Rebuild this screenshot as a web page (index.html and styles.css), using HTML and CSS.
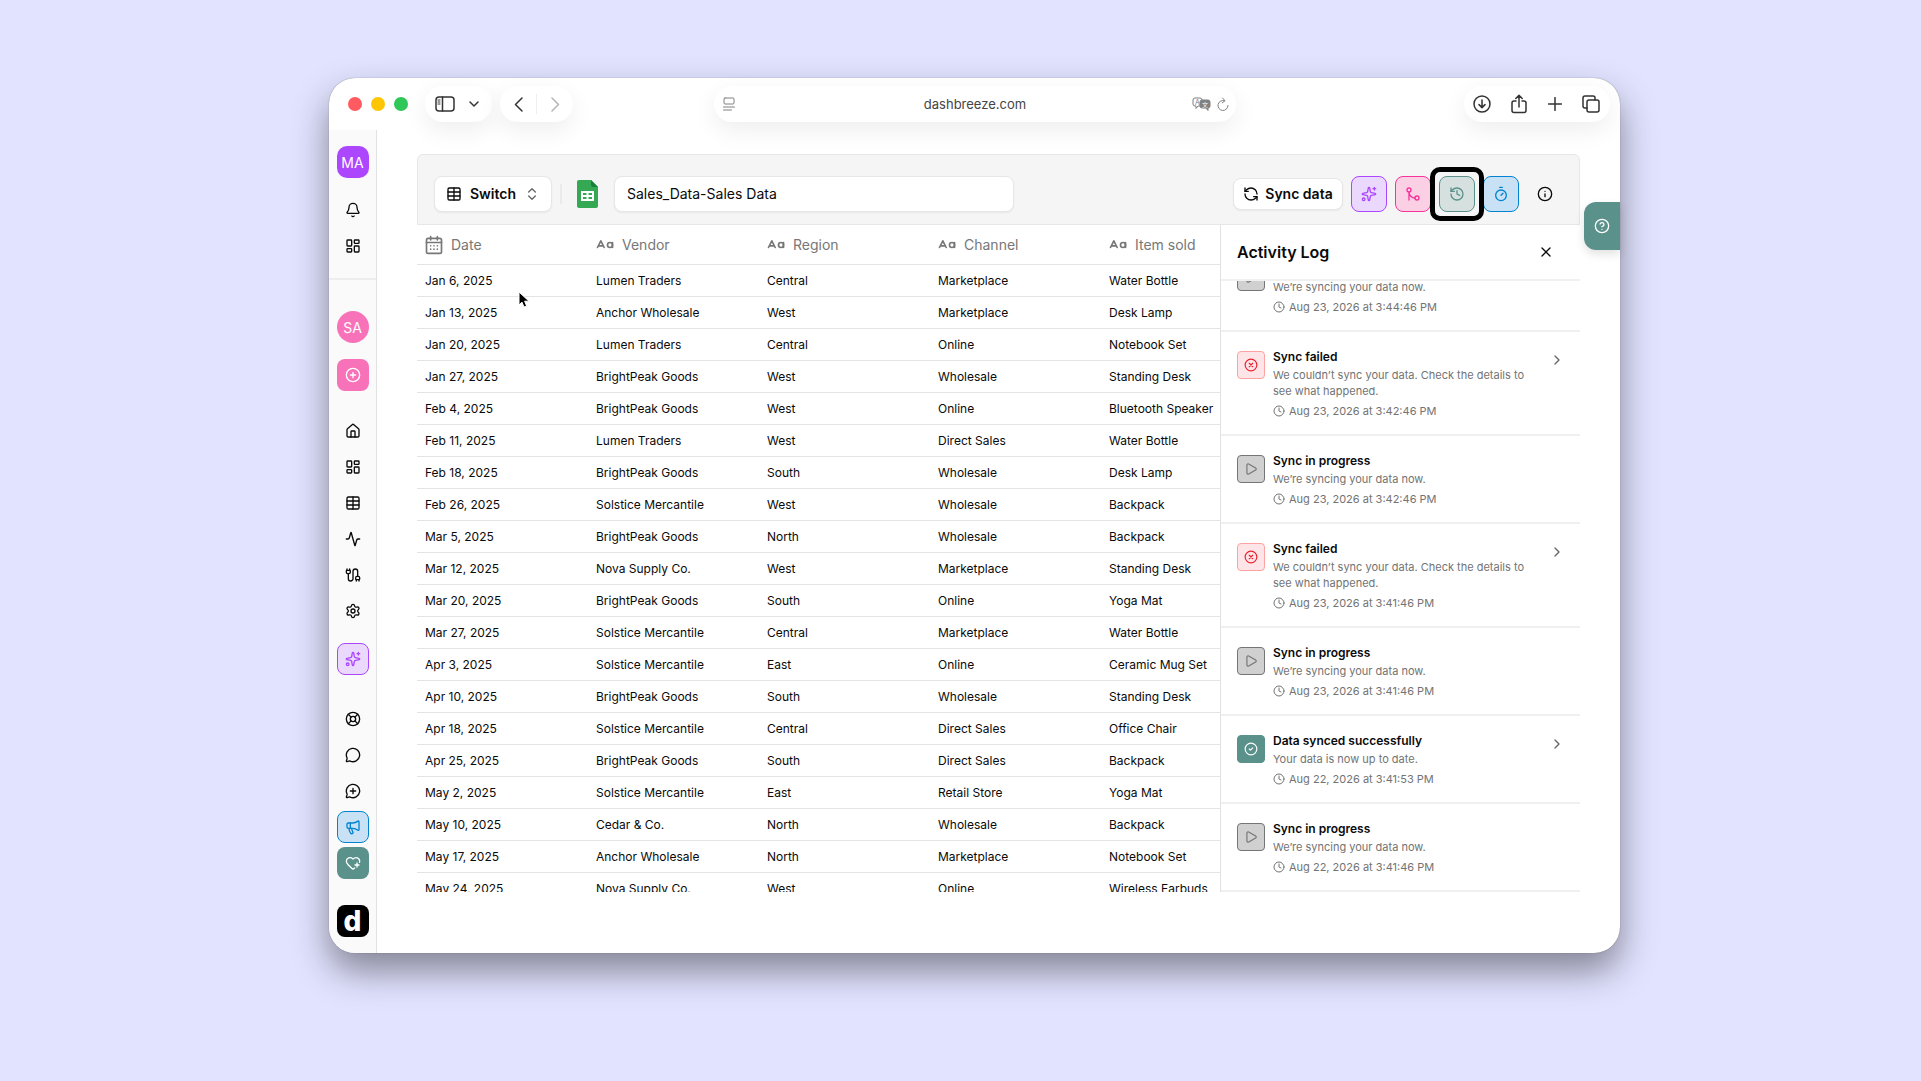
FILE: index.html
```html
<!DOCTYPE html>
<html lang="en">
<head>
    <meta charset="UTF-8">
    <meta name="viewport" content="width=device-width, initial-scale=1.0">
    <title>Dashbreeze - Sales_Data</title>
    <link rel="stylesheet" href="styles.css">
</head>
<body>
    <!-- Icon set -->
    <svg class="icon-defs" aria-hidden="true">
        <symbol id="bell" viewBox="0 0 24 24"><path d="M10.268 21a2 2 0 0 0 3.464 0"/><path d="M3.262 15.326A1 1 0 0 0 4 17h16a1 1 0 0 0 .74-1.673C19.41 13.956 18 12.499 18 8A6 6 0 0 0 6 8c0 4.499-1.411 5.956-2.738 7.326"/></symbol>
        <symbol id="dashboard" viewBox="0 0 24 24"><rect x="3" y="3" width="7" height="9" rx="1"/><rect x="14" y="3" width="7" height="5" rx="1"/><rect x="14" y="12" width="7" height="9" rx="1"/><rect x="3" y="16" width="7" height="5" rx="1"/></symbol>
        <symbol id="circle-plus" viewBox="0 0 24 24"><circle cx="12" cy="12" r="10"/><path d="M8 12h8M12 8v8"/></symbol>
        <symbol id="home" viewBox="0 0 24 24"><path d="M15 21v-8a1 1 0 0 0-1-1h-4a1 1 0 0 0-1 1v8"/><path d="M3 10a2 2 0 0 1 .709-1.528l7-5.999a2 2 0 0 1 2.582 0l7 5.999A2 2 0 0 1 21 10v9a2 2 0 0 1-2 2H5a2 2 0 0 1-2-2z"/></symbol>
        <symbol id="table" viewBox="0 0 24 24"><rect x="3" y="3" width="18" height="18" rx="2"/><path d="M12 3v18M3 9h18M3 15h18"/></symbol>
        <symbol id="activity" viewBox="0 0 24 24"><path d="M22 12h-2.48a2 2 0 0 0-1.93 1.46l-2.35 8.36a.25.25 0 0 1-.48 0L9.24 2.18a.25.25 0 0 0-.48 0l-2.35 8.36A2 2 0 0 1 4.49 12H2"/></symbol>
        <symbol id="cable" viewBox="0 0 24 24"><path d="M17 19a1 1 0 0 1-1-1v-2a2 2 0 0 1 2-2h2a2 2 0 0 1 2 2v2a1 1 0 0 1-1 1z"/><path d="M17 21v-2M21 21v-2M3 5V3M7 5V3"/><path d="M19 14V6.5a1 1 0 0 0-7 0v11a1 1 0 0 1-7 0V10"/><path d="M4 10a2 2 0 0 1-2-2V6a1 1 0 0 1 1-1h4a1 1 0 0 1 1 1v2a2 2 0 0 1-2 2z"/></symbol>
        <symbol id="settings" viewBox="0 0 24 24"><path d="M9.671 4.136a2.34 2.34 0 0 1 4.659 0 2.34 2.34 0 0 0 3.319 1.915 2.34 2.34 0 0 1 2.33 4.033 2.34 2.34 0 0 0 0 3.831 2.34 2.34 0 0 1-2.33 4.033 2.34 2.34 0 0 0-3.319 1.915 2.34 2.34 0 0 1-4.659 0 2.34 2.34 0 0 0-3.32-1.915 2.34 2.34 0 0 1-2.33-4.033 2.34 2.34 0 0 0 0-3.831A2.34 2.34 0 0 1 6.35 6.051a2.34 2.34 0 0 0 3.319-1.915"/><circle cx="12" cy="12" r="3"/></symbol>
        <symbol id="sparkles" viewBox="0 0 24 24"><path d="M11.017 2.814a1 1 0 0 1 1.966 0l1.051 5.558a2 2 0 0 0 1.594 1.594l5.558 1.051a1 1 0 0 1 0 1.966l-5.558 1.051a2 2 0 0 0-1.594 1.594l-1.051 5.558a1 1 0 0 1-1.966 0l-1.051-5.558a2 2 0 0 0-1.594-1.594l-5.558-1.051a1 1 0 0 1 0-1.966l5.558-1.051a2 2 0 0 0 1.594-1.594z"/><path d="M20 2v4M22 4h-4"/><circle cx="4" cy="20" r="2"/></symbol>
        <symbol id="lifebuoy" viewBox="0 0 24 24"><circle cx="12" cy="12" r="10"/><circle cx="12" cy="12" r="4"/><path d="m4.93 4.93 4.24 4.24M14.83 9.17l4.24-4.24M14.83 14.83l4.24 4.24M9.17 14.83l-4.24 4.24"/></symbol>
        <symbol id="chat" viewBox="0 0 24 24"><path d="M2.992 16.342a2 2 0 0 1 .094 1.167l-1.065 3.29a1 1 0 0 0 1.236 1.168l3.413-.998a2 2 0 0 1 1.099.092 10 10 0 1 0-4.777-4.719"/></symbol>
        <symbol id="chat-plus" viewBox="0 0 24 24"><path d="M2.992 16.342a2 2 0 0 1 .094 1.167l-1.065 3.29a1 1 0 0 0 1.236 1.168l3.413-.998a2 2 0 0 1 1.099.092 10 10 0 1 0-4.777-4.719"/><path d="M8 12h8M12 8v8"/></symbol>
        <symbol id="megaphone" viewBox="0 0 24 24"><path d="M11 6a13 13 0 0 0 8.4-2.8A1 1 0 0 1 21 4v12a1 1 0 0 1-1.6.8A13 13 0 0 0 11 14H5a2 2 0 0 1-2-2V8a2 2 0 0 1 2-2z"/><path d="M6 14a12 12 0 0 0 2.4 7.2 2 2 0 0 0 3.2-2.4A8 8 0 0 1 10 14M8 6v8"/></symbol>
        <symbol id="heart-plus" viewBox="0 0 24 24"><path d="m14.479 19.374-.971.939a2 2 0 0 1-3 .019L5 15c-1.5-1.5-3-3.2-3-5.5a5.5 5.5 0 0 1 9.591-3.676.56.56 0 0 0 .818 0A5.49 5.49 0 0 1 22 9.5a5.2 5.2 0 0 1-.219 1.49"/><path d="M15 15h6M18 12v6"/></symbol>
        <symbol id="up-down" viewBox="0 0 24 24"><path d="m7 15 5 5 5-5M7 9l5-5 5 5"/></symbol>
        <symbol id="refresh" viewBox="0 0 24 24"><path d="M21 12a9 9 0 0 0-9-9 9.75 9.75 0 0 0-6.74 2.74L3 8"/><path d="M3 3v5h5"/><path d="M3 12a9 9 0 0 0 9 9 9.75 9.75 0 0 0 6.74-2.74L21 16"/><path d="M16 16h5v5"/></symbol>
        <symbol id="merge" viewBox="0 0 24 24"><circle cx="18" cy="18" r="3"/><circle cx="6" cy="6" r="3"/><path d="M6 21V9a9 9 0 0 0 9 9"/></symbol>
        <symbol id="history" viewBox="0 0 24 24"><path d="M3 12a9 9 0 1 0 9-9 9.75 9.75 0 0 0-6.74 2.74L3 8"/><path d="M3 3v5h5M12 7v5l4 2"/></symbol>
        <symbol id="timer" viewBox="0 0 24 24"><path d="M10 2h4M12 14l3-3"/><circle cx="12" cy="14" r="8"/></symbol>
        <symbol id="info" viewBox="0 0 24 24"><circle cx="12" cy="12" r="10"/><path d="M12 16v-4M12 8h.01"/></symbol>
        <symbol id="help" viewBox="0 0 24 24"><circle cx="12" cy="12" r="10"/><path d="M9.09 9a3 3 0 0 1 5.83 1c0 2-3 3-3 3M12 17h.01"/></symbol>
        <symbol id="close" viewBox="0 0 24 24"><path d="M18 6 6 18M6 6l12 12"/></symbol>
        <symbol id="play" viewBox="0 0 24 24"><path d="M5 5a2 2 0 0 1 3.008-1.728l11.997 6.998a2 2 0 0 1 .003 3.458l-12 7A2 2 0 0 1 5 19z"/></symbol>
        <symbol id="circle-x" viewBox="0 0 24 24"><circle cx="12" cy="12" r="10"/><path d="m15 9-6 6M9 9l6 6"/></symbol>
        <symbol id="circle-check" viewBox="0 0 24 24"><circle cx="12" cy="12" r="10"/><path d="m9 12 2 2 4-4"/></symbol>
        <symbol id="clock" viewBox="0 0 24 24"><circle cx="12" cy="12" r="10"/><path d="M12 6v6l4 2"/></symbol>
        <symbol id="chevron-right" viewBox="0 0 24 24"><path d="m9 18 6-6-6-6"/></symbol>
        <symbol id="case" viewBox="0 0 24 24"><path d="m3 15 4-8 4 8M4 13h6"/><circle cx="18" cy="12" r="3"/><path d="M21 9v6"/></symbol>
        <symbol id="calendar" viewBox="0 0 24 24"><path d="M8 2v4M16 2v4M3 9h18"/><rect x="3" y="4" width="18" height="18" rx="2"/><path d="M8 13h.01M12 13h.01M16 13h.01M8 17h.01M12 17h.01M16 17h.01"/></symbol>
    </svg>

    <div class="browser">
        <header class="toolbar">
            <div class="toolbar-left">
                <div class="lights">
                    <span class="light red"></span>
                    <span class="light yellow"></span>
                    <span class="light green"></span>
                </div>
                <div class="pill sidebar-pill">
                    <button aria-label="Sidebar">
                        <svg width="20" height="16" viewBox="0 0 20 16"><rect x="1" y="1" width="18" height="14" rx="3"/><path d="M7.500 1v14"/><path class="thin" d="M3 4h2M3 6h2M3 8h2"/></svg>
                    </button>
                    <button aria-label="Tab groups">
                        <svg width="10" height="6" viewBox="0 0 10 6"><path d="m1 1 4 4 4-4"/></svg>
                    </button>
                </div>
                <div class="pill nav-pill">
                    <button aria-label="Back"><svg width="9" height="15" viewBox="0 0 9 15"><path d="M8 1 1.500 7.500 8 14"/></svg></button>
                    <button class="muted" aria-label="Forward"><svg width="9" height="15" viewBox="0 0 9 15"><path d="M1 1l6.500 6.500L1 14"/></svg></button>
                </div>
            </div>
            <div class="pill url">
                <svg class="reader" width="12" height="14" viewBox="0 0 12 14"><rect x="1" y="1" width="10" height="6" rx="1"/><path d="M.5 10h11M.5 13h8"/></svg>
                <span class="domain">dashbreeze.com</span>
                <span class="url-tools">
                    <svg class="translate" width="20" height="14" viewBox="0 0 20 14">
                        <path d="M8 9H6l-2 2.500V9H3a2 2 0 0 1-2-2V3a2 2 0 0 1 2-2h5a2 2 0 0 1 2 1.500"/>
                        <path class="bubble" d="M10 3h6a2 2 0 0 1 2 2v4a2 2 0 0 1-2 2v2.500L14 11h-4a2 2 0 0 1-2-2V5a2 2 0 0 1 2-2z"/>
                        <text x="3" y="8">A</text>
                        <text class="cjk" x="10" y="10">文</text>
                    </svg>
                    <svg width="12" height="15" viewBox="0 0 12 15"><path class="thin" d="M11 8.500A5 5 0 1 1 7.500 3.700M5.500 1l2.500 2.700-2.800 2.200"/></svg>
                </span>
            </div>
            <div class="pill actions">
                <button aria-label="Downloads"><svg width="18" height="18" viewBox="0 0 18 18"><circle cx="9" cy="9" r="8"/><path d="M9 5v7.500M6 9.600l3 3 3-3"/></svg></button>
                <button aria-label="Share"><svg width="16" height="20" viewBox="0 0 16 20"><path d="M5 7H3a2 2 0 0 0-2 2v7.500a2 2 0 0 0 2 2h10a2 2 0 0 0 2-2V9a2 2 0 0 0-2-2h-2M8 13V1.500M4.800 4.500 8 1.300l3.200 3.200"/></svg></button>
                <button aria-label="New tab"><svg width="14" height="14" viewBox="0 0 14 14"><path d="M7 .5v13M.5 7h13"/></svg></button>
                <button aria-label="Show tabs"><svg width="18" height="18" viewBox="0 0 18 18"><rect x="5" y="5" width="12" height="12" rx="2"/><path d="M5 13H3a2 2 0 0 1-2-2V3a2 2 0 0 1 2-2h8a2 2 0 0 1 2 2v2"/></svg></button>
            </div>
        </header>

        <div class="page">
            <nav class="sidebar">
                <div class="group">
                    <button class="side-btn avatar-user">MA</button>
                </div>
                <div class="group">
                    <a class="side-btn" href="#" aria-label="Notifications"><svg class="icon"><use href="#bell"/></svg></a>
                    <a class="side-btn" href="#" aria-label="Dashboards"><svg class="icon"><use href="#dashboard"/></svg></a>
                </div>
                <div class="group workspace">
                    <button class="side-btn avatar-space">SA</button>
                    <button class="side-btn add" aria-label="Add"><svg class="icon"><use href="#circle-plus"/></svg></button>
                </div>
                <div class="group main-links">
                    <a class="side-btn" href="#" aria-label="Home"><svg class="icon"><use href="#home"/></svg></a>
                    <a class="side-btn" href="#" aria-label="Boards"><svg class="icon"><use href="#dashboard"/></svg></a>
                    <a class="side-btn" href="#" aria-label="Tables"><svg class="icon"><use href="#table"/></svg></a>
                    <a class="side-btn" href="#" aria-label="Metrics"><svg class="icon"><use href="#activity"/></svg></a>
                    <a class="side-btn" href="#" aria-label="Connections"><svg class="icon"><use href="#cable"/></svg></a>
                    <a class="side-btn" href="#" aria-label="Settings"><svg class="icon"><use href="#settings"/></svg></a>
                </div>
                <div class="group">
                    <button class="side-btn purple" aria-label="Ask AI"><svg class="icon"><use href="#sparkles"/></svg></button>
                </div>
                <div class="group support">
                    <a class="side-btn" href="#" aria-label="Help"><svg class="icon"><use href="#lifebuoy"/></svg></a>
                    <a class="side-btn" href="#" aria-label="Chat"><svg class="icon"><use href="#chat"/></svg></a>
                    <a class="side-btn" href="#" aria-label="Feedback"><svg class="icon"><use href="#chat-plus"/></svg></a>
                    <button class="side-btn blue" aria-label="What's new"><svg class="icon"><use href="#megaphone"/></svg></button>
                    <button class="side-btn teal" aria-label="Refer"><svg class="icon"><use href="#heart-plus"/></svg></button>
                </div>
                <a class="side-btn logo" href="#">d</a>
            </nav>

            <main class="content">
                <div class="card">
                    <div class="card-header">
                        <button class="btn switch"><svg class="icon"><use href="#table"/></svg>Switch<svg class="icon grey"><use href="#up-down"/></svg></button>
                        <span class="divider"></span>
                        <svg class="sheet" width="21" height="28" viewBox="0 0 21 28"><path fill="#34a853" d="M2 0h12l7 7v19a2 2 0 0 1-2 2H2a2 2 0 0 1-2-2V2a2 2 0 0 1 2-2z"/><path fill="#188038" d="M14 0l7 7h-5a2 2 0 0 1-2-2z"/><path fill="#fff" fill-rule="evenodd" d="M4 11h13v10H4zM6 13v2h3.500v-2zM11.500 13v2H15v-2zM6 17v2h3.500v-2zM11.500 17v2H15v-2z"/></svg>
                        <input class="name" type="text" value="Sales_Data-Sales Data" aria-label="Table name">
                        <div class="tools">
                            <button class="btn sync"><svg class="icon"><use href="#refresh"/></svg>Sync data</button>
                            <button class="tool purple" aria-label="AI"><svg class="icon"><use href="#sparkles"/></svg></button>
                            <button class="tool pink" aria-label="Merge"><svg class="icon"><use href="#merge"/></svg></button>
                            <button class="tool green highlighted" aria-label="Activity log"><svg class="icon"><use href="#history"/></svg></button>
                            <button class="tool blue" aria-label="Schedule"><svg class="icon"><use href="#timer"/></svg></button>
                            <button class="tool plain" aria-label="Info"><svg class="icon"><use href="#info"/></svg></button>
                        </div>
                    </div>

                    <div class="card-body">
                        <div class="table-wrap">
                            <table>
                                <thead>
                                    <tr>
                                        <th><span><svg class="icon"><use href="#calendar"/></svg>Date</span></th>
                                        <th><span><svg class="icon"><use href="#case"/></svg>Vendor</span></th>
                                        <th><span><svg class="icon"><use href="#case"/></svg>Region</span></th>
                                        <th><span><svg class="icon"><use href="#case"/></svg>Channel</span></th>
                                        <th><span><svg class="icon"><use href="#case"/></svg>Item sold</span></th>
                                    </tr>
                                </thead>
                                <tbody>
                                    <tr><td>Jan 6, 2025</td><td>Lumen Traders</td><td>Central</td><td>Marketplace</td><td>Water Bottle</td></tr>
                                    <tr><td>Jan 13, 2025</td><td>Anchor Wholesale</td><td>West</td><td>Marketplace</td><td>Desk Lamp</td></tr>
                                    <tr><td>Jan 20, 2025</td><td>Lumen Traders</td><td>Central</td><td>Online</td><td>Notebook Set</td></tr>
                                    <tr><td>Jan 27, 2025</td><td>BrightPeak Goods</td><td>West</td><td>Wholesale</td><td>Standing Desk</td></tr>
                                    <tr><td>Feb 4, 2025</td><td>BrightPeak Goods</td><td>West</td><td>Online</td><td>Bluetooth Speaker</td></tr>
                                    <tr><td>Feb 11, 2025</td><td>Lumen Traders</td><td>West</td><td>Direct Sales</td><td>Water Bottle</td></tr>
                                    <tr><td>Feb 18, 2025</td><td>BrightPeak Goods</td><td>South</td><td>Wholesale</td><td>Desk Lamp</td></tr>
                                    <tr><td>Feb 26, 2025</td><td>Solstice Mercantile</td><td>West</td><td>Wholesale</td><td>Backpack</td></tr>
                                    <tr><td>Mar 5, 2025</td><td>BrightPeak Goods</td><td>North</td><td>Wholesale</td><td>Backpack</td></tr>
                                    <tr><td>Mar 12, 2025</td><td>Nova Supply Co.</td><td>West</td><td>Marketplace</td><td>Standing Desk</td></tr>
                                    <tr><td>Mar 20, 2025</td><td>BrightPeak Goods</td><td>South</td><td>Online</td><td>Yoga Mat</td></tr>
                                    <tr><td>Mar 27, 2025</td><td>Solstice Mercantile</td><td>Central</td><td>Marketplace</td><td>Water Bottle</td></tr>
                                    <tr><td>Apr 3, 2025</td><td>Solstice Mercantile</td><td>East</td><td>Online</td><td>Ceramic Mug Set</td></tr>
                                    <tr><td>Apr 10, 2025</td><td>BrightPeak Goods</td><td>South</td><td>Wholesale</td><td>Standing Desk</td></tr>
                                    <tr><td>Apr 18, 2025</td><td>Solstice Mercantile</td><td>Central</td><td>Direct Sales</td><td>Office Chair</td></tr>
                                    <tr><td>Apr 25, 2025</td><td>BrightPeak Goods</td><td>South</td><td>Direct Sales</td><td>Backpack</td></tr>
                                    <tr><td>May 2, 2025</td><td>Solstice Mercantile</td><td>East</td><td>Retail Store</td><td>Yoga Mat</td></tr>
                                    <tr><td>May 10, 2025</td><td>Cedar &amp; Co.</td><td>North</td><td>Wholesale</td><td>Backpack</td></tr>
                                    <tr><td>May 17, 2025</td><td>Anchor Wholesale</td><td>North</td><td>Marketplace</td><td>Notebook Set</td></tr>
                                    <tr><td>May 24, 2025</td><td>Nova Supply Co.</td><td>West</td><td>Online</td><td>Wireless Earbuds</td></tr>
                                </tbody>
                            </table>
                        </div>

                        <aside class="log">
                            <div class="log-header">
                                <h2>Activity Log</h2>
                                <button aria-label="Close"><svg class="icon"><use href="#close"/></svg></button>
                            </div>
                            <div class="log-list">
                                <div class="entry">
                                    <span class="status running"><svg class="icon"><use href="#play"/></svg></span>
                                    <div class="entry-text">
                                        <h3>Sync in progress</h3>
                                        <p>We’re syncing your data now.</p>
                                        <time><svg class="icon"><use href="#clock"/></svg>Aug 23, 2026 at 3:44:46 PM</time>
                                    </div>
                                </div>
                                <div class="entry">
                                    <span class="status failed"><svg class="icon"><use href="#circle-x"/></svg></span>
                                    <div class="entry-text">
                                        <h3>Sync failed</h3>
                                        <p>We couldn’t sync your data. Check the details to see what happened.</p>
                                        <time><svg class="icon"><use href="#clock"/></svg>Aug 23, 2026 at 3:42:46 PM</time>
                                    </div>
                                    <button class="open" aria-label="Details"><svg class="icon"><use href="#chevron-right"/></svg></button>
                                </div>
                                <div class="entry">
                                    <span class="status running"><svg class="icon"><use href="#play"/></svg></span>
                                    <div class="entry-text">
                                        <h3>Sync in progress</h3>
                                        <p>We’re syncing your data now.</p>
                                        <time><svg class="icon"><use href="#clock"/></svg>Aug 23, 2026 at 3:42:46 PM</time>
                                    </div>
                                </div>
                                <div class="entry">
                                    <span class="status failed"><svg class="icon"><use href="#circle-x"/></svg></span>
                                    <div class="entry-text">
                                        <h3>Sync failed</h3>
                                        <p>We couldn’t sync your data. Check the details to see what happened.</p>
                                        <time><svg class="icon"><use href="#clock"/></svg>Aug 23, 2026 at 3:41:46 PM</time>
                                    </div>
                                    <button class="open" aria-label="Details"><svg class="icon"><use href="#chevron-right"/></svg></button>
                                </div>
                                <div class="entry">
                                    <span class="status running"><svg class="icon"><use href="#play"/></svg></span>
                                    <div class="entry-text">
                                        <h3>Sync in progress</h3>
                                        <p>We’re syncing your data now.</p>
                                        <time><svg class="icon"><use href="#clock"/></svg>Aug 23, 2026 at 3:41:46 PM</time>
                                    </div>
                                </div>
                                <div class="entry">
                                    <span class="status done"><svg class="icon"><use href="#circle-check"/></svg></span>
                                    <div class="entry-text">
                                        <h3>Data synced successfully</h3>
                                        <p>Your data is now up to date.</p>
                                        <time><svg class="icon"><use href="#clock"/></svg>Aug 22, 2026 at 3:41:53 PM</time>
                                    </div>
                                    <button class="open" aria-label="Details"><svg class="icon"><use href="#chevron-right"/></svg></button>
                                </div>
                                <div class="entry">
                                    <span class="status running"><svg class="icon"><use href="#play"/></svg></span>
                                    <div class="entry-text">
                                        <h3>Sync in progress</h3>
                                        <p>We’re syncing your data now.</p>
                                        <time><svg class="icon"><use href="#clock"/></svg>Aug 22, 2026 at 3:41:46 PM</time>
                                    </div>
                                </div>
                            </div>
                        </aside>
                    </div>
                </div>
            </main>
        </div>

        <button class="help-tab" aria-label="Support"><svg class="icon"><use href="#help"/></svg></button>
        <svg class="cursor" width="12" height="18" viewBox="0 0 12 18"><path d="M1 1v13l3-2.800 2 4.800 2.600-1.100-2-4.700H11z"/></svg>
    </div>
</body>
</html>
```
FILE: styles.css
```css
* {
    box-sizing: border-box;
}

body {
    margin: 0;
    height: 100vh;
    padding: 78px 301px 128px 329px;
    background-color: #e2e3ff;
    font-family: Inter, sans-serif;
    color: #0a0a0a;
}

h2, h3, p {
    margin: 0;
}

button {
    font-family: inherit;
    color: inherit;
    background: none;
    border: none;
    padding: 0;
    display: flex;
    align-items: center;
    justify-content: center;
    cursor: pointer;
}

a {
    color: inherit;
    text-decoration: none;
}

.icon-defs {
    display: none;
}

.icon {
    width: 16px;
    height: 16px;
    flex: none;
    fill: none;
    stroke: currentColor;
    stroke-width: 2;
    stroke-linecap: round;
    stroke-linejoin: round;
}

/* Browser window */
.browser {
    position: relative;
    height: 100%;
    display: flex;
    flex-direction: column;
    background-color: #fff;
    border-radius: 26px;
    box-shadow: 0 0 1px rgba(0, 0, 0, 0.5), 0 18px 36px rgba(0, 0, 0, 0.42);
}

.toolbar {
    height: 52px;
    flex: none;
    display: grid;
    grid-template-columns: 1fr minmax(0, 522px) 1fr;
    align-items: center;
    padding: 0 10px;
    column-gap: 9px;
}

.toolbar svg {
    fill: none;
    stroke: currentColor;
    stroke-width: 1.5;
    stroke-linecap: round;
    stroke-linejoin: round;
}

.toolbar .thin {
    stroke-width: 1;
}

.toolbar-left,
.lights {
    display: flex;
    align-items: center;
    gap: 8px;
}

.lights {
    gap: 9px;
    margin: 0 9px;
}

.light {
    width: 14px;
    height: 14px;
    border-radius: 50%;
}

.red {
    background-color: #ff5b60;
}

.yellow {
    background-color: #fdc600;
}

.green {
    background-color: #30c759;
}

.pill {
    height: 36px;
    display: flex;
    align-items: center;
    border-radius: 18px;
    background-color: #fff;
    color: #333;
    box-shadow: 0 8px 24px rgba(0, 0, 0, 0.07);
}

.sidebar-pill {
    gap: 14px;
    padding: 0 13px 0 10px;
}

.nav-pill {
    width: 73px;
}

.nav-pill button {
    flex: 1;
    height: 20px;
}

.nav-pill button + button {
    border-left: 1px solid #eee;
}

.muted {
    color: #b5b5b5;
}

.url {
    justify-content: space-between;
    padding: 0 7px 0 9px;
    color: #808080;
}

.url .domain {
    margin-left: 24px;
    font-size: 13px;
    color: #444;
}

.url-tools {
    display: flex;
    align-items: center;
    gap: 5px;
}

.translate path,
.toolbar .reader {
    stroke-width: 1;
}

.translate .bubble {
    fill: currentColor;
}

.translate text {
    fill: currentColor;
    stroke: none;
    font-size: 7px;
}

.translate .cjk {
    fill: #fff;
    font-family: "Noto Sans CJK SC", sans-serif;
    font-size: 6px;
}

.actions {
    justify-self: end;
    width: 146px;
    padding: 0 10px 0 9px;
    justify-content: space-between;
}

/* Sidebar */
.page {
    flex: 1;
    min-height: 0;
    display: flex;
}

.sidebar {
    width: 48px;
    flex: none;
    display: flex;
    flex-direction: column;
    align-items: center;
    gap: 16px;
    padding-top: 16px;
    background-color: #fafafa;
    border-right: 1px solid #e2e2e2;
    border-bottom-left-radius: 26px;
}

.group {
    width: 100%;
    display: flex;
    flex-direction: column;
    align-items: center;
    gap: 4px;
}

.side-btn {
    width: 32px;
    height: 32px;
    display: flex;
    align-items: center;
    justify-content: center;
    border-radius: 8px;
    font-size: 14px;
}

.avatar-user {
    background-color: #ad46ff;
    color: #fff;
    border-radius: 10px;
}

.workspace {
    gap: 16px;
    padding-top: 31px;
    border-top: 2px solid #eee;
}

.avatar-space {
    background-color: #f772b9;
    color: #fff;
    border-radius: 50%;
}

.add {
    background-color: #f772b9;
    color: #fff;
}

.main-links {
    padding-top: 8px;
}

.support {
    padding-top: 12px;
}

.purple {
    background-color: #ead9fd;
    border: 1px solid #ad46ff;
    color: #ad46ff;
}

.blue {
    background-color: #c9e1f4;
    border: 1px solid #0084d1;
    color: #0084d1;
}

.teal {
    background-color: #5a918b;
    color: #fff;
}

.logo {
    margin-top: 10px;
    background-color: #000;
    color: #fff;
    font-size: 28px;
    font-weight: 800;
    line-height: 32px;
}

/* Table card */
.content {
    flex: 1;
    min-width: 0;
    padding: 24px 40px 61px;
}

.card {
    height: 100%;
    display: flex;
    flex-direction: column;
}

.card-header {
    height: 71px;
    flex: none;
    display: flex;
    align-items: center;
    padding: 8px 16px 0;
    background-color: #f5f5f5;
    border: 1px solid #e7e7e7;
    border-radius: 6px 6px 0 0;
}

.btn {
    height: 36px;
    gap: 8px;
    background-color: #fff;
    border: 1px solid #e7e7e7;
    border-radius: 8px;
    box-shadow: 0 1px 2px rgba(0, 0, 0, 0.06);
    font-size: 14px;
    font-weight: 600;
}

.switch {
    width: 118px;
}

.grey {
    color: #666;
}

.divider {
    width: 2px;
    height: 20px;
    margin: 0 15px 0 8px;
    background-color: #eaeaea;
}

.name {
    flex: 0 1 400px;
    min-width: 0;
    height: 36px;
    margin: 0 16px;
    padding: 0 12px;
    border: 1px solid #e7e7e7;
    border-radius: 8px;
    box-shadow: 0 1px 2px rgba(0, 0, 0, 0.06);
    font-family: inherit;
    font-size: 14px;
    color: inherit;
}

.tools {
    display: flex;
    align-items: center;
    gap: 8px;
    margin-left: auto;
}

.sync {
    height: 32px;
    width: 110px;
    gap: 6px;
}

.tool {
    position: relative;
    width: 36px;
    height: 36px;
    border-radius: 8px;
}

.tool.pink {
    background-color: #fbd0e5;
    border: 1px solid #f6339a;
    color: #f6339a;
}

.tool.green {
    background-color: #d6e1df;
    border: 1px solid #5a918b;
    color: #5a918b;
}

.highlighted::after {
    content: "";
    position: absolute;
    inset: -10px;
    border: 5px solid #000;
    border-radius: 10px;
}

.highlighted {
    z-index: 1;
}

.card-body {
    flex: 1;
    min-height: 0;
    display: flex;
}

.table-wrap {
    flex: 1;
    min-width: 0;
    overflow: hidden;
}

table {
    width: 855px;
    table-layout: fixed;
    border-collapse: separate;
    border-spacing: 0;
}

th,
td {
    height: 32px;
    padding: 0 8px;
    border-bottom: 1px solid #e4e4e4;
    font-size: 12px;
    text-align: left;
    white-space: nowrap;
}

th {
    height: 40px;
    padding: 0 7px;
    font-size: 14px;
    font-weight: 400;
    color: #777;
}

th span {
    display: flex;
    align-items: center;
    gap: 7px;
}

th .icon {
    width: 20px;
    height: 20px;
}

/* Activity log */
.log {
    width: 360px;
    flex: none;
    display: flex;
    flex-direction: column;
    border-left: 1px solid #e2e2e2;
}

.log-header {
    height: 56px;
    flex: none;
    display: flex;
    align-items: center;
    justify-content: space-between;
    padding: 0 26px 0 16px;
    border-bottom: 2px solid #f0f0f0;
}

.log-header h2 {
    font-size: 16px;
    font-weight: 600;
}

.log-list {
    flex: 1;
    min-height: 0;
    display: flex;
    flex-direction: column;
    justify-content: flex-end;
    overflow: hidden;
}

.entry {
    flex: none;
    display: flex;
    padding: 16px 15px 15px 16px;
    border-bottom: 2px solid #f0f0f0;
}

.status {
    width: 28px;
    height: 28px;
    flex: none;
    display: flex;
    align-items: center;
    justify-content: center;
    margin: 3px 8px 0 0;
    border: 1px solid;
    border-radius: 4px;
}

.status .icon {
    width: 14px;
    height: 14px;
}

.running {
    background-color: #d0d0d0;
    color: #757575;
}

.failed {
    background-color: #ffe5e7;
    border-color: #ffa2a2;
    color: #e7222e;
}

.done {
    background-color: #5a918b;
    border-color: #5a918b;
    color: #fff;
}

.entry-text {
    flex: 1;
    color: #737373;
    font-size: 11px;
    line-height: 16px;
}

.entry-text h3 {
    margin-bottom: 1px;
    color: #0a0a0a;
    font-size: 12px;
    font-weight: 600;
    line-height: 18px;
}

.entry-text time {
    display: flex;
    align-items: center;
    gap: 4px;
    margin-top: 4px;
}

.entry-text .icon {
    width: 12px;
    height: 12px;
}

.open {
    width: 16px;
    height: 16px;
    margin: 4px 0 0 16px;
    color: #666;
}

.help-tab {
    position: absolute;
    top: 124px;
    right: 0;
    width: 36px;
    height: 48px;
    border-radius: 12px 0 0 12px;
    background-color: #5a918b;
    color: #fff;
    box-shadow: 0 4px 10px rgba(0, 0, 0, 0.12);
}

.cursor {
    position: absolute;
    top: 213px;
    left: 189px;
    stroke: #fff;
}
```
